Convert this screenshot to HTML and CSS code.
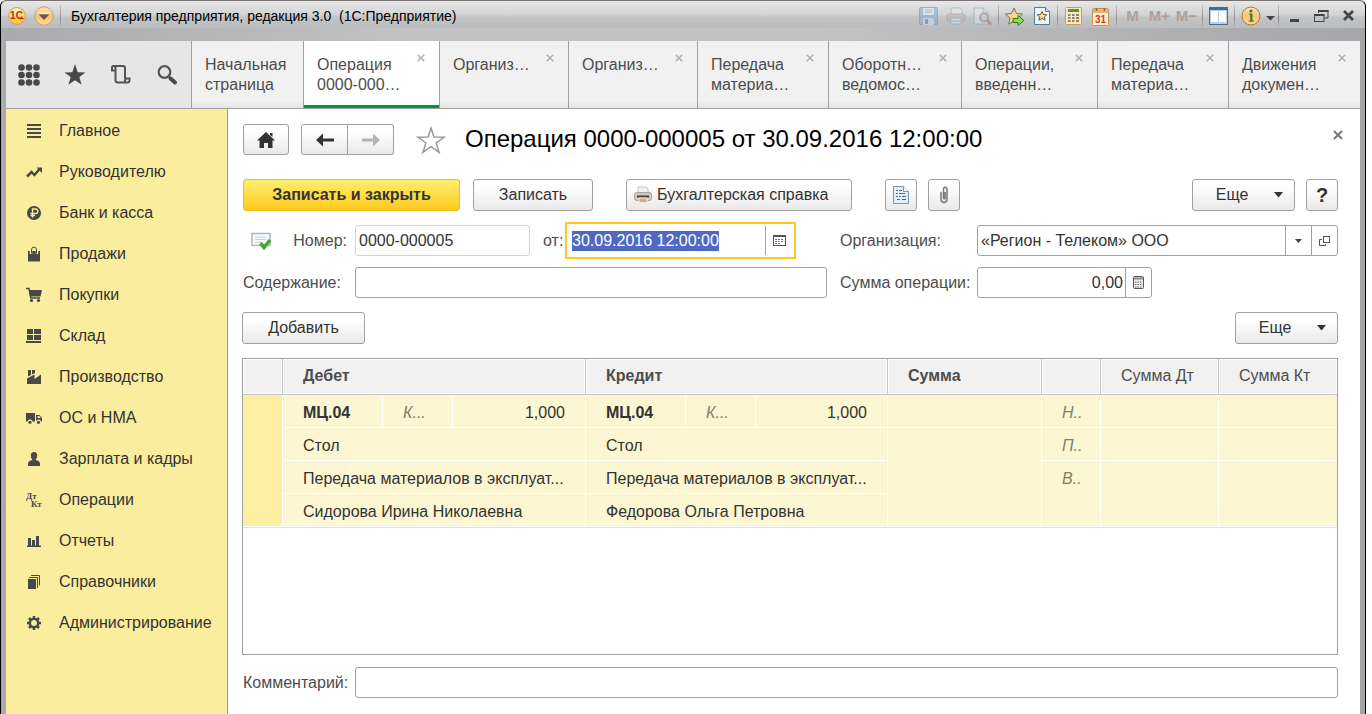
FILE: index.html
```html
<!DOCTYPE html>
<html lang="ru">
<head>
<meta charset="utf-8">
<title>Бухгалтерия предприятия, редакция 3.0 (1С:Предприятие)</title>
<link rel="stylesheet" href="styles.css">
<script src="app.js" defer></script>
</head>
<body>
<div class="window">
  <header class="titlebar">
    <button class="tb-btn tb-round" aria-label="1С"><svg width="18" height="18" viewBox="0 0 18 18"><defs><radialGradient id="logo" cx=".5" cy=".25" r=".8"><stop offset="0" stop-color="#fffbd0"/><stop offset=".5" stop-color="#fde25e"/><stop offset="1" stop-color="#f0b52a"/></radialGradient></defs><circle cx="9" cy="9" r="8.5" fill="url(#logo)" stroke="#d0a070"/><text x="8.500" y="12" class="logo-text" text-anchor="middle">1С</text><path d="M10 11.500h5.500" stroke="#d9190f" stroke-width="1.300"/></svg></button>
    <button class="tb-btn tb-round" aria-label="Главное меню"><svg width="20" height="20" viewBox="0 0 20 20"><defs><linearGradient id="orb" x2="0" y2="1"><stop offset="0" stop-color="#fbe3b8"/><stop offset=".5" stop-color="#f8c67a"/><stop offset="1" stop-color="#fbd79a"/></linearGradient></defs><circle cx="10" cy="10" r="9.2" fill="url(#orb)" stroke="#c9a067"/><path d="M4.500 8h11l-1.500 2-4 4-4-4z" fill="#6d5a48"/><path d="M5 7.500h10" stroke="#f4f4e8" stroke-width="1.500"/></svg></button>
    <span class="tb-sep tb-sep-first"></span>
    <span class="tb-title">Бухгалтерия предприятия, редакция 3.0&nbsp; (1С:Предприятие)</span>
    <div class="tb-tools">
      <button class="tb-btn faded" aria-label="Сохранить"><svg width="19" height="19" viewBox="0 0 19 19"><rect x=".5" y=".5" width="18" height="17" rx="1" fill="#7fa8c8" stroke="#5a88b0"/><rect x="4" y="1" width="11" height="7" fill="#e8f0f6"/><path d="M5.500 3h8M5.500 5h8" stroke="#7ba2c2"/><rect x="4" y="11" width="11" height="7" fill="#c9dcea"/><rect x="6" y="12" width="3" height="5" fill="#4a7aa8"/></svg></button>
      <button class="tb-btn faded" aria-label="Печать"><svg width="20" height="18" viewBox="0 0 20 18"><path d="M5 1h9l2 2v5H5z" fill="#e6eff6" stroke="#7fa1bd"/><rect x="1" y="7" width="18" height="7" rx="2" fill="#c8b5aa" stroke="#a39288"/><path d="M5 11h10v6H5z" fill="#dfeaf2" stroke="#85a5bd"/><path d="M6 14h8" stroke="#6f9cc4"/></svg></button>
      <button class="tb-btn faded" aria-label="Предварительный просмотр"><svg width="20" height="19" viewBox="0 0 20 19"><path d="M1 1h9l5 5v11H1z" fill="#dbe8f1" stroke="#7fa1bd"/><path d="M10 1v5h5" fill="none" stroke="#7fa1bd"/><circle cx="11" cy="10.500" r="4" fill="#bcd3e4" stroke="#a8836c" stroke-width="2"/><path d="M14 13.500l4 4" stroke="#9c7460" stroke-width="2.500"/></svg></button>
      <span class="tb-sep"></span>
      <button class="tb-btn" aria-label="Добавить в избранное"><svg width="20" height="19" viewBox="0 0 20 19"><path d="M9 1l2.500 5.500 6 .6-4.500 4 1.300 6L9 14l-5.300 3.100 1.300-6-4.500-4 6-.6z" fill="#fbd68c" stroke="#7d7050"/><path d="M8 11.500h5V8.500l6 5-6 5v-3H8z" fill="#8ed94f" stroke="#2e7d1c"/></svg></button>
      <button class="tb-btn" aria-label="Избранное"><svg width="16" height="18" viewBox="0 0 16 18"><path d="M.5.500h11l4 4v13H.5z" fill="#eef4f8" stroke="#57799a"/><path d="M11.500.500v4h4" fill="#cddde9" stroke="#57799a"/><path d="M8 4.500l1.500 3 3.300.3-2.500 2.200.8 3.200L8 11.500l-3.100 1.700.8-3.200L3.200 7.800l3.300-.3z" fill="#fbdc94" stroke="#6b5a3c"/></svg></button>
      <span class="tb-sep"></span>
      <button class="tb-btn" aria-label="Калькулятор"><svg width="17" height="18" viewBox="0 0 17 18"><rect x=".5" y=".5" width="16" height="17" rx="1" fill="#fbe9c2" stroke="#c99c62"/><rect x="3" y="2" width="11" height="3" fill="#4f9a32"/><path d="M3 8h2.500M7 8h2.500M11 8h3M3 11h2.500M7 11h2.500M11 11h3M3 14h2.500M7 14h2.500M11 14h3" stroke="#6b6350" stroke-width="1.500"/></svg></button>
      <button class="tb-btn" aria-label="Календарь"><svg width="17" height="19" viewBox="0 0 17 19"><rect x=".5" y="1.500" width="16" height="17" rx="1" fill="#fdf0d0" stroke="#c79055"/><rect x="1" y="2" width="15" height="4" fill="#f0b070"/><path d="M4.500 1v3M12.500 1v3" stroke="#8a6a4c" stroke-width="1.500"/><text x="8.500" y="16" class="cal-text" text-anchor="middle">31</text></svg></button>
      <span class="tb-sep"></span>
      <button class="tb-btn tb-mem">M</button>
      <button class="tb-btn tb-mem">M+</button>
      <button class="tb-btn tb-mem">M−</button>
      <span class="tb-sep"></span>
      <button class="tb-btn" aria-label="Панели"><svg width="19" height="18" viewBox="0 0 19 18"><rect x=".5" y=".5" width="18" height="17" fill="#b9d0e0" stroke="#476f93"/><path d="M0 1.500h19" stroke="#3d6f98" stroke-width="3"/><path d="M2 4h7v11H2zM10 4h7v11h-7z" fill="#f8fcfe"/></svg></button>
      <span class="tb-sep"></span>
      <button class="tb-btn" aria-label="Справка"><svg width="20" height="20" viewBox="0 0 20 20"><circle cx="10" cy="10" r="9" fill="url(#orb)" stroke="#b07a38"/><circle cx="10" cy="5" r="1.600" fill="#4a7a20"/><path d="M8.200 8.200h2.100V15M7.800 15.200h5" fill="none" stroke="#4a7a20" stroke-width="1.300"/><path d="M10.300 8v7" stroke="#4a7a20" stroke-width="2.200"/></svg></button>
      <button class="tb-btn tb-narrow" aria-label="Меню справки"><svg width="9" height="10" viewBox="0 0 9 10"><path d="M0 5h9L4.500 9.500z" fill="#444"/></svg></button>
      <span class="tb-sep"></span>
      <button class="tb-btn" aria-label="Свернуть"><svg width="14" height="14" viewBox="0 0 14 14"><path d="M2 11.500h9" stroke="#444" stroke-width="3"/></svg></button>
      <button class="tb-btn" aria-label="Восстановить"><svg width="15" height="14" viewBox="0 0 15 14"><path d="M4.500 4V1.500h9.500V9h-4" fill="none" stroke="#444"/><path d="M4 2h10.500" stroke="#444" stroke-width="2"/><rect x=".5" y="5.500" width="9.500" height="7" fill="none" stroke="#444"/><path d="M0 6h10.500" stroke="#444" stroke-width="2"/></svg></button>
      <button class="tb-btn" aria-label="Закрыть"><svg width="14" height="14" viewBox="0 0 14 14"><path d="M2 2l9 9M11 2l-9 9" stroke="#444" stroke-width="2.800"/></svg></button>
    </div>
  </header>

  <div class="frame">
    <nav class="tabs" aria-label="Открытые окна">
      <div class="tools">
        <button class="tool" aria-label="Меню"><svg width="22" height="22" viewBox="0 0 22 22" fill="#484848"><circle cx="3.500" cy="3.500" r="3.300"/><circle cx="11" cy="3.500" r="3.300"/><circle cx="18.500" cy="3.500" r="3.300"/><circle cx="3.500" cy="11" r="3.300"/><circle cx="11" cy="11" r="3.300"/><circle cx="18.500" cy="11" r="3.300"/><circle cx="3.500" cy="18.500" r="3.300"/><circle cx="11" cy="18.500" r="3.300"/><circle cx="18.500" cy="18.500" r="3.300"/></svg></button>
        <button class="tool" aria-label="Избранное"><svg width="22" height="22" viewBox="0 0 22 22"><path d="M11 0l2.700 8.200 7.800.2-6.200 4.700 2.300 7.600L11 16.200l-6.600 4.500 2.300-7.600L.5 8.400l7.800-.2z" fill="#484848"/></svg></button>
        <button class="tool" aria-label="История"><svg width="22" height="22" viewBox="0 0 22 22" fill="none" stroke="#555" stroke-width="2"><path d="M5.500 6.500H2V3.500Q2 2 3.500 2H13q2 0 2 2v10.500"/><path d="M3.500 2q2 0 2 2v12q0 2.500 2.500 2.500h9.500q2 0 2-2v-2H17q-2 0-2 2v2"/></svg></button>
        <button class="tool" aria-label="Поиск"><svg width="22" height="22" viewBox="0 0 22 22"><circle cx="8.500" cy="8" r="5.800" fill="none" stroke="#555" stroke-width="2.200"/><path d="M12.500 12.500l2 1.500" stroke="#555" stroke-width="2"/><path d="M14.500 14.500l4.500 4" stroke="#484848" stroke-width="4" stroke-linecap="round"/></svg></button>
      </div>
      <div class="tab"><a href="#">Начальная страница</a></div>
      <div class="tab active"><a href="#">Операция<br>0000-000…</a><button class="tab-close" aria-label="Закрыть"><svg width="8" height="8" viewBox="0 0 8 8"><path d="M.7.7l6.600 6.600M7.300.7L.7 7.300"/></svg></button></div>
      <div class="tab"><a href="#">Организ…</a><button class="tab-close" aria-label="Закрыть"><svg width="8" height="8" viewBox="0 0 8 8"><path d="M.7.7l6.600 6.600M7.300.7L.7 7.300"/></svg></button></div>
      <div class="tab"><a href="#">Организ…</a><button class="tab-close" aria-label="Закрыть"><svg width="8" height="8" viewBox="0 0 8 8"><path d="M.7.7l6.600 6.600M7.300.7L.7 7.300"/></svg></button></div>
      <div class="tab"><a href="#">Передача<br>материа…</a><button class="tab-close" aria-label="Закрыть"><svg width="8" height="8" viewBox="0 0 8 8"><path d="M.7.7l6.600 6.600M7.300.7L.7 7.300"/></svg></button></div>
      <div class="tab"><a href="#">Оборотн…<br>ведомос…</a><button class="tab-close" aria-label="Закрыть"><svg width="8" height="8" viewBox="0 0 8 8"><path d="M.7.7l6.600 6.600M7.300.7L.7 7.300"/></svg></button></div>
      <div class="tab"><a href="#">Операции,<br>введенн…</a><button class="tab-close" aria-label="Закрыть"><svg width="8" height="8" viewBox="0 0 8 8"><path d="M.7.7l6.600 6.600M7.300.7L.7 7.300"/></svg></button></div>
      <div class="tab"><a href="#">Передача<br>материа…</a><button class="tab-close" aria-label="Закрыть"><svg width="8" height="8" viewBox="0 0 8 8"><path d="M.7.7l6.600 6.600M7.300.7L.7 7.300"/></svg></button></div>
      <div class="tab"><a href="#">Движения<br>докумен…</a><button class="tab-close" aria-label="Закрыть"><svg width="8" height="8" viewBox="0 0 8 8"><path d="M.7.7l6.600 6.600M7.300.7L.7 7.300"/></svg></button></div>
    </nav>

    <div class="workspace">
      <nav class="sidebar" aria-label="Разделы">
        <a class="section" href="#"><svg width="16" height="16" viewBox="0 0 16 16"><path d="M1 2h14M1 6h14M1 10h14M1 14h14" stroke="#484848" stroke-width="2"/></svg>Главное</a>
        <a class="section" href="#"><svg width="16" height="16" viewBox="0 0 16 16"><path d="M1 12.500l4.500-4.500 3 3 5-6" fill="none" stroke="#484848" stroke-width="2.500"/><path d="M10.500 3.500H16V9z" fill="#484848"/></svg>Руководителю</a>
        <a class="section" href="#"><svg width="16" height="16" viewBox="0 0 16 16"><circle cx="8" cy="8" r="7" fill="#484848"/><path d="M6.500 12.500V4h3q2.300 0 2.300 2.300T9.500 8.500H4.500M4.500 10.500H9" fill="none" stroke="#fbed9e" stroke-width="1.400"/></svg>Банк и касса</a>
        <a class="section" href="#"><svg width="16" height="16" viewBox="0 0 16 16"><path d="M2 5h12v10.500H2z" fill="#484848"/><path d="M5 8V4.500Q5 1.500 8 1.500t3 3V8" fill="none" stroke="#fbed9e" stroke-width="2.500"/><path d="M5.500 7.500V4q0-3 2.500-3t2.500 3v3.500" fill="none" stroke="#484848"/></svg>Продажи</a>
        <a class="section" href="#"><svg width="16" height="16" viewBox="0 0 16 16"><path d="M0 1.500h3L4.800 11H14" fill="none" stroke="#484848" stroke-width="1.500"/><path d="M3 3h13l-1.500 6.500H4z" fill="#484848"/><circle cx="5.500" cy="13.500" r="1.600" fill="#484848"/><circle cx="12.500" cy="13.500" r="1.600" fill="#484848"/></svg>Покупки</a>
        <a class="section" href="#"><svg width="16" height="16" viewBox="0 0 16 16" fill="#484848"><path d="M1 1h6v5H1zM8 1h7v5H8zM1 7h6v5H1zM8 7h7v5H8zM0 13h15v2H0z"/></svg>Склад</a>
        <a class="section" href="#"><svg width="16" height="16" viewBox="0 0 16 16" fill="#484848"><path d="M1 15V9.500l7.500-4V10L15 5.500V15zM2 1h3v5L2 7.500zM6 1h3v3L6 5.500z"/></svg>Производство</a>
        <a class="section" href="#"><svg width="16" height="16" viewBox="0 0 16 16" fill="#484848"><path d="M0 3h9v8.500H0zM10 5h3.500L16 8v3.500h-6z"/><path d="M11.500 6h1.700l1.600 2h-3.300z" fill="#fbed9e"/><circle cx="4" cy="12" r="2.500" fill="#fbed9e"/><circle cx="12.500" cy="12" r="2.500" fill="#fbed9e"/><circle cx="4" cy="12.300" r="1.600"/><circle cx="12.500" cy="12.300" r="1.600"/></svg>ОС и НМА</a>
        <a class="section" href="#"><svg width="16" height="16" viewBox="0 0 16 16" fill="#484848"><path d="M8 1q3.200 0 3.200 3.500 0 3-1.700 4.500 4.500.5 4.500 4v2H2v-2q0-3.500 4.500-4-1.700-1.500-1.700-4.500Q4.800 1 8 1z"/></svg>Зарплата и кадры</a>
        <a class="section" href="#"><svg width="16" height="16" viewBox="0 0 16 16"><text x="0" y="7" class="dtkt">Дт</text><text x="5" y="15" class="dtkt">Кт</text></svg>Операции</a>
        <a class="section" href="#"><svg width="16" height="16" viewBox="0 0 16 16" fill="#484848"><path d="M2 5h3v8H2zM6 7h3v6H6zM10 3h3v10h-3zM1 12.500h14v1.500H1z"/></svg>Отчеты</a>
        <a class="section" href="#"><svg width="16" height="16" viewBox="0 0 16 16"><path d="M2 5h8v10H2z" fill="#484848"/><path d="M3 3.500h8.500V14M5 1.500h8.500v10" fill="none" stroke="#484848"/></svg>Справочники</a>
        <a class="section" href="#"><svg width="16" height="16" viewBox="0 0 16 16"><circle cx="8" cy="8" r="4.200" fill="none" stroke="#484848" stroke-width="2.500"/><path d="M8 1v2.500M8 12.500V15M1 8h2.500M12.500 8H15M3 3l1.800 1.800M11.200 11.200L13 13M13 3l-1.800 1.800M4.800 11.200L3 13" stroke="#484848" stroke-width="2.500"/></svg>Администрирование</a>
      </nav>

      <main class="form">
        <div class="heading">
          <button class="btn icon-wide" aria-label="На главную"><svg width="20" height="18" viewBox="0 0 20 18"><path d="M10 1l9 8.500h-2.500V17H12v-5H8v5H3.500V9.500H1z" fill="#333"/><path d="M14 2h2.500v4L14 4z" fill="#333"/></svg></button>
          <div class="btn-pair">
            <button class="btn" aria-label="Назад"><svg width="20" height="16" viewBox="0 0 20 16"><path d="M8 1.500L1 8l7 6.500V9.500h11v-3H8z" fill="#333"/></svg></button>
            <button class="btn" aria-label="Вперед"><svg width="20" height="16" viewBox="0 0 20 16"><path d="M12 1.500L19 8l-7 6.500V9.500H1v-3h11z" fill="#b4b4b4"/></svg></button>
          </div>
          <button class="plain" aria-label="В избранное"><svg width="30" height="28" viewBox="0 0 30 28"><path d="M15 2l3 9 10 .3-7.900 5.700 3 9.400-8.100-5.700-8.100 5.700 3-9.400L2 11.300l10-.3z" fill="#fff" stroke="#999" stroke-width="1.500"/></svg></button>
          <h1>Операция 0000-000005 от 30.09.2016 12:00:00</h1>
          <button class="plain close" aria-label="Закрыть"><svg width="10" height="10" viewBox="0 0 10 10"><path d="M1 1l8 8M9 1L1 9" stroke="#777" stroke-width="2"/></svg></button>
        </div>

        <div class="toolbar">
          <button class="btn primary">Записать и закрыть</button>
          <button class="btn save">Записать</button>
          <button class="btn print"><svg width="18" height="18" viewBox="0 0 18 18"><path d="M4 1h8l2 2v6H4z" fill="#edf2f6" stroke="#b9c8d4"/><rect x=".5" y="6.500" width="17" height="8" rx="2" fill="#cfc8c2" stroke="#aaa39c"/><path d="M3 9.500h12v2H3z" fill="#4a4039"/><path d="M5 12h8v4.500H5z" fill="#e9a583" stroke="#f4e5da"/></svg>Бухгалтерская справка</button>
          <button class="btn square report" aria-label="Проводки"><svg width="16" height="18" viewBox="0 0 16 18"><path d="M.5.500h10l5 5v12H.5z" fill="#e3eff8" stroke="#7898b2"/><path d="M10.500.500v5h5" fill="#fff" stroke="#7898b2"/><path d="M3 4.500h2M6 4.500h3M3 7.500h2M6 7.500h6M3 10.500h2M6 10.500h2M9 10.500h4M4 13.500h3M9 13.500h4" stroke="#42709a"/></svg></button>
          <button class="btn square" aria-label="Присоединенные файлы"><svg width="10" height="18" viewBox="0 0 10 18"><path d="M2 6v6.500q0 4 3 4t3-4V4q0-2.800-1.800-2.800T4.500 4v8q0 1 .8 1t.8-1V6" fill="none" stroke="#777" stroke-width="1.500"/></svg></button>
          <button class="btn more more-top">Еще<svg width="9" height="6" viewBox="0 0 9 6"><path d="M0 0h9L4.500 5.500z" fill="#333"/></svg></button>
          <button class="btn square help" aria-label="Помощь">?</button>
        </div>

        <div class="fields">
          <div class="label-cell numbered"><svg width="21" height="18" viewBox="0 0 21 18"><path d="M1 1.500h18v12H1z" fill="#fbfdff" stroke="#a7b9cb" stroke-width="1.500"/><path d="M4 5h11M4 7.500h11M4 10h7" stroke="#c3cfdd"/><path d="M9.500 11l3.500 4.500L19 8" fill="none" stroke="#43a82c" stroke-width="3.500"/></svg><label for="number">Номер:</label></div>
          <div class="line">
            <input class="input number" id="number" value="0000-000005">
            <label class="from" for="date">от:</label>
            <div class="combo date"><input id="date" value="30.09.2016 12:00:00"><button aria-label="Выбрать дату"><svg width="13" height="11" viewBox="0 0 13 11"><rect x=".5" y=".5" width="12" height="10" fill="#fff" stroke="#555"/><path d="M0 1.500h13" stroke="#555"/><path d="M2 4.500h9M2 6.500h9M2 8.500h6" stroke="#777" stroke-dasharray="2 1"/></svg></button></div>
          </div>
          <label class="label-cell second" for="org">Организация:</label>
          <div class="combo"><input id="org" value="«Регион - Телеком» ООО"><button aria-label="Список"><svg width="7" height="4" viewBox="0 0 7 4"><path d="M0 0h7L3.500 4z" fill="#444"/></svg></button><button aria-label="Открыть"><svg width="12" height="12" viewBox="0 0 12 12" fill="none" stroke="#555"><rect x="4.500" y="1.500" width="6" height="6"/><path d="M3 4.500H.5v6h6V9"/></svg></button></div>

          <label class="label-cell" for="content">Содержание:</label>
          <input class="input" id="content">
          <label class="label-cell second" for="sum">Сумма операции:</label>
          <div class="combo sum"><input id="sum" value="0,00"><button aria-label="Калькулятор"><svg width="11" height="13" viewBox="0 0 11 13"><rect x=".5" y=".5" width="10" height="12" rx="1" fill="#eee" stroke="#555"/><path d="M1 2.500h9" stroke="#888" stroke-width="2"/><path d="M2 6h7M2 8.500h7M2 11h7" stroke="#666" stroke-dasharray="1.500 1"/></svg></button></div>
        </div>

        <div class="table-tools">
          <button class="btn add">Добавить</button>
          <button class="btn more">Еще<svg width="9" height="6" viewBox="0 0 9 6"><path d="M0 0h9L4.500 5.500z" fill="#333"/></svg></button>
        </div>

        <div class="table-box">
          <table>
            <colgroup><col class="c-mark"><col class="c-acc"><col class="c-qty"><col class="c-debit"><col class="c-acc"><col class="c-qty"><col class="c-credit"><col class="c-sum"><col class="c-kind"><col class="c-part"><col class="c-part"></colgroup>
            <thead><tr><th></th><th colspan="3">Дебет</th><th colspan="3">Кредит</th><th>Сумма</th><th></th><th class="light">Сумма Дт</th><th class="light">Сумма Кт</th></tr></thead>
            <tbody>
              <tr><td class="mark" rowspan="4"></td><td class="acc">МЦ.04</td><td class="dim">К...</td><td class="num">1,000</td><td class="acc">МЦ.04</td><td class="dim">К...</td><td class="num">1,000</td><td></td><td class="dim">Н..</td><td></td><td class="last"></td></tr>
              <tr><td colspan="3">Стол</td><td colspan="3">Стол</td><td rowspan="3"></td><td class="dim">П..</td><td></td><td class="last"></td></tr>
              <tr><td colspan="3">Передача материалов в эксплуат...</td><td colspan="3">Передача материалов в эксплуат...</td><td class="dim" rowspan="2">В..</td><td rowspan="2"></td><td class="last" rowspan="2"></td></tr>
              <tr><td colspan="3">Сидорова Ирина Николаевна</td><td colspan="3">Федорова Ольга Петровна</td></tr>
            </tbody>
          </table>
        </div>

        <div class="comment"><label for="comment">Комментарий:</label><input class="input" id="comment"></div>
      </main>
    </div>
  </div>
</div>
</body>
</html>
```
FILE: styles.css
```css
* { box-sizing: border-box; }

body {
  margin: 0;
  padding-right: 6px;
  background: #fff;
  color: #333;
  font: 16px/20px "Liberation Sans", Arial, sans-serif;
}

button, input { font: inherit; color: inherit; margin: 0; }
button { padding: 0; border: 0; background: none; display: flex; align-items: center; justify-content: center; }
a { color: inherit; text-decoration: none; }
svg { flex: none; display: block; }

.window {
  min-height: 100vh;
  display: flex;
  flex-direction: column;
  border: solid #000;
  border-width: 0 1px;
  border-top: 1px solid #777375;
  border-radius: 6px 6px 0 0;
  background: #a9aaad;
}

/* Title bar */
.titlebar {
  height: 27px;
  display: flex;
  align-items: center;
  padding: 3px 3px 0 2px;
  border-radius: 6px 6px 0 0;
  background: linear-gradient(#e8e8e8, #d2d3d4 50%, #c3c4c5 60%, #bbbcbe);
}
.tb-btn { width: 27px; height: 24px; }
.tb-narrow { width: 12px; }
.tb-sep { width: 1px; height: 22px; margin: 0 2px; background: linear-gradient(#c4c4c4, #8c8c8e 60%, #b4b4b6); }
.tb-sep-first { margin: 0 10px 0 3px; }
.tb-title { flex: 1; font-size: 14px; color: #000; white-space: nowrap; }
.tb-tools { display: flex; align-items: center; }
.tb-mem { font-size: 15px; font-weight: bold; color: #b0a096; }
.faded { opacity: .5; }
.logo-text { font: bold 10px "Liberation Sans", Arial, sans-serif; fill: #d9190f; }
.cal-text { font: bold 10px "Liberation Sans", Arial, sans-serif; fill: #e0301e; }

.frame {
  flex: 1;
  display: flex;
  flex-direction: column;
  padding: 13px 5px 0;
  background: linear-gradient(90deg, #a9aaad, #c2c2c3 30%, #c2c2c3 60%, #a5a6a9);
}

/* Tabs */
.tabs {
  display: grid;
  grid-template-columns: 185px 112fr 136fr 129fr 129fr 131fr 133fr 136fr 131fr 132fr;
  height: 68px;
  border-bottom: 1px solid #a0a0a0;
  background: #f0f0f0;
}
.tools { display: flex; align-items: center; background: #e6e6e6; }
.tool { width: 46px; height: 46px; }
.tab {
  position: relative;
  padding: 14px 0 0 13px;
  border-left: 1px solid #a0a0a0;
  background: linear-gradient(#f1f1f1 90%, #e4e4e4);
  color: #4d4d4d;
  overflow: hidden;
}
.tab a { display: block; }
.tab.active { background: #fff; box-shadow: inset 0 -3px #00963f; }
.tab-close { position: absolute; top: 10px; right: 11px; width: 14px; height: 14px; }
.tab-close path { stroke: #b0b0b0; stroke-width: 1.5; }

.workspace { flex: 1; display: flex; }

/* Sections */
.sidebar { width: 222px; flex: none; padding-top: 1px; background: #fbed9e; border-right: 1px solid #b9a32c; }
.section { display: flex; align-items: center; gap: 17px; height: 41px; padding-left: 20px; }
.dtkt { font: bold 9px "Liberation Serif", serif; fill: #484848; }

/* Form */
.form { flex: 1; min-width: 0; display: flex; flex-direction: column; padding: 15px 22px 16px 14px; background: #fff; }
.btn {
  height: 32px;
  border: 1px solid #a0a0a0;
  border-radius: 3px;
  background: linear-gradient(#fff 20%, #e9e9e9);
}
.heading { display: flex; align-items: center; height: 31px; margin-bottom: 24px; padding-left: 1px; }
.heading .btn { width: 46px; height: 31px; }
.icon-wide { margin-right: 12px; }
.btn-pair { display: flex; margin-right: 22px; }
.btn-pair .btn:first-child { width: 47px; border-radius: 3px 0 0 3px; }
.btn-pair .btn:last-child { border-left: 0; border-radius: 0 3px 3px 0; }
.heading h1 { flex: 1; margin: 0; padding: 0 0 2px 19px; font-size: 24px; line-height: 30px; font-weight: normal; color: #000; white-space: nowrap; }
.close { width: 10px; align-self: flex-start; margin: 6px -5px 0 0; }

.toolbar { display: flex; margin-bottom: 14px; padding-left: 1px; }
.primary { width: 217px; border-color: #f2bd1b; background: linear-gradient(#ffee70, #fdca1d); font-weight: bold; }
.save { width: 120px; margin-left: 13px; }
.print { width: 226px; margin-left: 33px; gap: 5px; justify-content: flex-start; padding-left: 7px; }
.square { width: 32px; margin-left: 11px; }
.report { margin-left: 33px; }
.more { width: 103px; gap: 26px; padding-left: 12px; }
.more-top { margin-left: auto; }
.help { font-size: 20px; font-weight: bold; }

.fields {
  display: grid;
  grid-template-columns: 113px minmax(0, 472fr) 150px minmax(0, 361fr);
  row-gap: 11px;
  align-items: center;
  margin-bottom: 14px;
}
.label-cell, .from, .comment label { color: #4d4d4d; }
.label-cell { padding-left: 1px; }
.second { padding-left: 13px; }
.numbered { display: flex; align-items: center; justify-content: space-between; padding: 0 8px 0 9px; }
.line { display: flex; align-items: center; padding-right: 34px; }
.input, .combo { height: 31px; border: 1px solid #a0a0a0; border-radius: 3px; background: #fff; min-width: 0; }
.input { width: 100%; padding: 0 3px; }
.number { flex: 1 1 175px; border-color: #d4d4d4; }
.from { width: 38px; flex: none; padding-left: 13px; }
.combo { display: flex; }
.combo input { flex: 1; min-width: 0; width: 0; border: 0; padding: 0 3px; outline: 0; background: none; }
.combo button { width: 26px; border-left: 1px solid #a0a0a0; }
.date { flex: 1 1 225px; border-color: transparent; outline: 2px solid #fcca1e; outline-offset: 1px; border-radius: 0; }
.date button { width: 27px; }
.date input::selection { background: #4f69c3; color: #fff; }
.sum { width: 175px; }
.sum input { text-align: right; padding-right: 2px; }

.table-tools { display: flex; justify-content: space-between; margin-bottom: 14px; }
.add { width: 123px; }

/* Entries */
.table-box { flex: 1; border: 1px solid #a0a0a0; }
table { width: 100%; table-layout: fixed; border-collapse: separate; border-spacing: 0; border-bottom: 1px solid #e0e0e0; }
.c-mark { width: 40px; }
.c-acc { width: 100px; }
.c-qty { width: 70px; }
.c-debit { width: 133px; }
.c-credit { width: 132px; }
.c-sum { width: 154px; }
.c-kind { width: 59px; }
.c-part { width: 118px; }
th {
  height: 36px;
  padding: 0 0 2px 20px;
  border: solid #c6c6c6;
  border-width: 0 1px 1px 0;
  background: #f1f1f1;
  box-shadow: inset 0 0 0 1px #fff;
  text-align: left;
  color: #4d4d4d;
}
th:last-child, .last { border-right: 0; }
th.light { font-weight: normal; }
td {
  height: 33px;
  padding: 8px 20px 4px;
  border: solid #fff;
  border-width: 0 1px 1px 0;
  background: #fdf6d2;
  line-height: 20px;
  vertical-align: top;
  white-space: nowrap;
}
td.last { border-right: 0; }
.mark { background: #fdefa1; }
.acc { font-weight: bold; padding-right: 0; }
.dim { font-style: italic; color: #85805f; padding-right: 0; }
.num { text-align: right; }

.comment { display: flex; align-items: center; margin-top: 12px; }
.comment label { width: 113px; flex: none; padding-left: 1px; }
```
FILE: app.js
```js
const date = document.getElementById("date");
date.focus();
date.select();
```
